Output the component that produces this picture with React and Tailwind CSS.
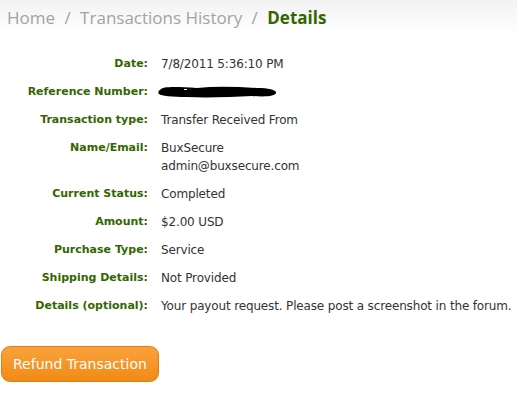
import React from 'react';

const rows = [
  { label: 'Date:', value: ['7/8/2011 5:36:10 PM'] },
  { label: 'Reference Number:', redacted: true },
  { label: 'Transaction type:', value: ['Transfer Received From'] },
  { label: 'Name/Email:', value: ['BuxSecure', 'admin@buxsecure.com'] },
  { label: 'Current Status:', value: ['Completed'] },
  { label: 'Amount:', value: ['$2.00 USD'] },
  { label: 'Purchase Type:', value: ['Service'] },
  { label: 'Shipping Details:', value: ['Not Provided'] },
  { label: 'Details (optional):', value: ['Your payout request. Please post a screenshot in the forum.'] },
];

function Redacted() {
  return (
    <svg width="122" height="14" viewBox="0 0 122 14" className="block">
      <path
        d="M3 5 C6 1 20 2 40 3 C60 1 80 2 100 3 C112 3 120 5 119 8 C118 11 110 12 95 11 C75 12 50 13 30 12 C15 12 4 11 2 9 C1 8 1 6 3 5 Z"
        fill="#000"
      />
      <rect x="27" y="4" width="3" height="1" fill="#fff" />
    </svg>
  );
}

export default function App() {
  return (
    <div className="w-[517px] h-[408px] bg-white overflow-hidden" style={{ fontFamily: '"DejaVu Sans", sans-serif' }}>
      <div className="h-[34px] bg-gradient-to-b from-[#f2f2f2] to-white pl-[7px] pt-[6px] text-[17px] leading-[24px] text-[#a3a3a3]" style={{ fontFamily: '"Open Sans", sans-serif' }}>
        Home <span className="mx-[5px]">/</span> Transactions History <span className="mx-[5px]">/</span>{' '}
        <span className="font-bold text-[#336600]">Details</span>
      </div>

      <div className="mt-[21px] flex flex-col gap-[10px] leading-[18px]">
        {rows.map((r) => (
          <div key={r.label} className="flex">
            <div className="w-[148px] shrink-0 text-right font-bold text-[#336600] text-[11px]">{r.label}</div>
            <div className="pl-[13px] text-[#333] text-[12px] tracking-[-0.15px]">
              {r.redacted ? (
                <div className="h-[18px] flex items-center -ml-[4px]">
                  <Redacted />
                </div>
              ) : (
                r.value.map((v) => <div key={v}>{v}</div>)
              )}
            </div>
          </div>
        ))}
      </div>

      <div className="mt-[31px] pl-[1px]">
        <button className="h-[36px] px-[11px] rounded-[9px] border border-[#e07f10] bg-gradient-to-b from-[#f9a23a] to-[#f18a12] text-white text-[14px]" style={{ fontFamily: '"DejaVu Sans", sans-serif' }}>
          Refund Transaction
        </button>
      </div>
    </div>
  );
}
